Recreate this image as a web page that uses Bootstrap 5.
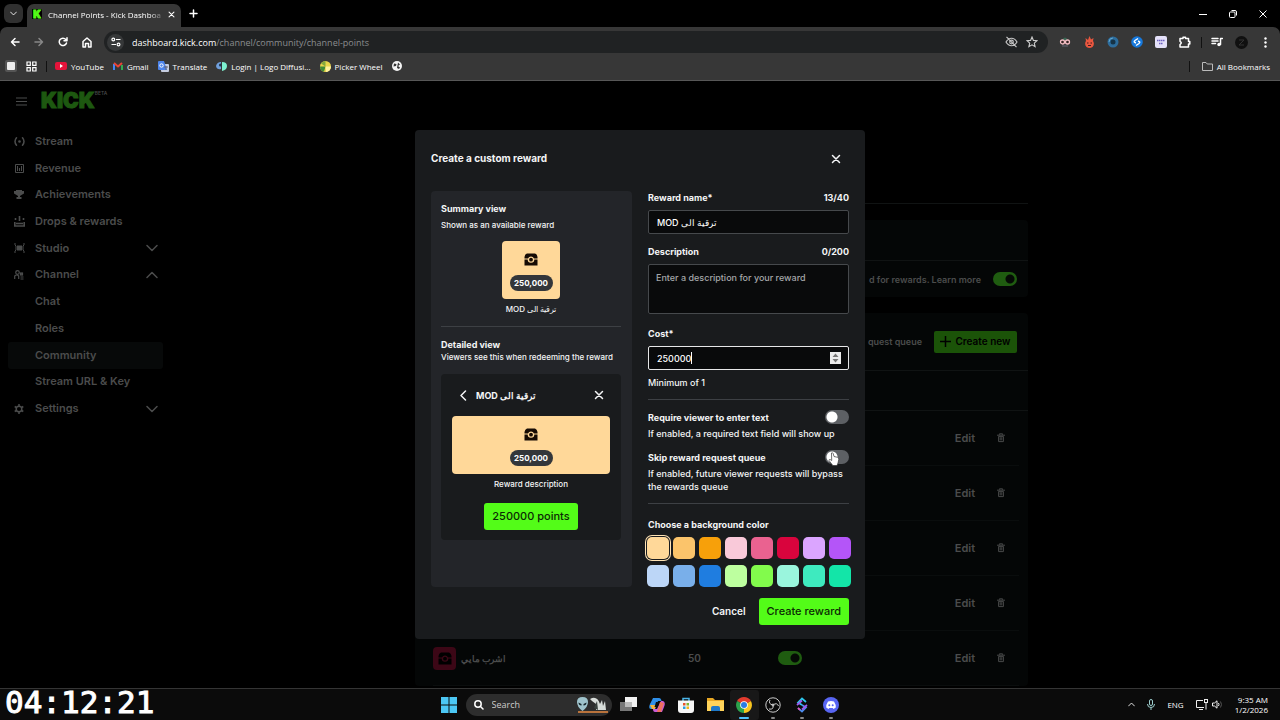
<!DOCTYPE html>
<html lang="en">
<head>
<meta charset="utf-8">
<meta name="viewport" content="width=device-width, initial-scale=1">
<title>Channel Points - Kick Dashboard</title>
<link href="https://cdn.jsdelivr.net/npm/bootstrap@5.3.0/dist/css/bootstrap.min.css" rel="stylesheet">
<style>
:root{--kick:#53fc18;--panel:#191b1d;--panel2:#232529;--dim:#4b4c4c;--bar:#373737}
body{background:#000;color:#fff;font:500 9px/13px Inter,"Noto Sans",sans-serif;height:100vh;overflow:hidden}
a{color:inherit;text-decoration:none}
button{background:none;border:0;padding:0;color:inherit;font:inherit}
svg{display:block;flex:none}
.ln{fill:none;stroke:currentColor;stroke-width:1.5;stroke-linecap:round;stroke-linejoin:round}
/* browser */
.chrome-ui{font-family:"Open Sans","Noto Sans",sans-serif;font-weight:500}
.tabstrip{height:27px;padding:4px 2px 0 4px}
.tabmenu{width:19px;height:19px;border-radius:6px;background:#303030}
.apptab{width:154px;height:23px;margin-left:4px;padding:0 6px 3px 5px;background:var(--bar);border-radius:7px 7px 0 0;font-size:8px}
.tabtitle{white-space:nowrap;-webkit-mask-image:linear-gradient(90deg,#000 90%,#0004);mask-image:linear-gradient(90deg,#000 90%,#0004)}
.fav{width:10px;height:10px;margin-right:6px;background:#000;color:var(--kick);font:900 10px/10px Inter,sans-serif;-webkit-text-stroke:1px var(--kick);text-align:center}
.winbtn{width:30px;height:19px}
.toolbar{height:30px;background:var(--bar);padding:0 3px;border-radius:7px 7px 0 0}
.tb{width:24px;height:24px;display:flex;align-items:center;justify-content:center}
.tb.off{color:#888}
.urlbar{height:22px;border-radius:11px;background:#202223;margin:0 5px;padding:0 6px 0 3px;font-size:9px}
.urlbar .site{width:17px;height:17px;border-radius:50%;background:#363839}
.urlbar .path{color:#8b8d8f}
.vr1{width:1px;height:11px;background:#111}
.tbsep{margin:0 3px 0 4px}
.bookmarks{height:24px;background:var(--bar);border-bottom:1px solid #575757;font-size:8px;padding:0 10px 5px 5px}
.bookmarks a{display:flex;align-items:center;gap:4px;white-space:nowrap;margin-right:9px}
.bookmarks a:last-child{margin-right:0}
/* dashboard */
.dash{background:#000;color:var(--dim)}
.logo{font:900 21px/20px Inter,sans-serif;margin-left:14px;color:#1d5810;-webkit-text-stroke:1px #1d5810}
.beta{font-size:5px;line-height:6px}
.side{width:163px;padding-left:8px}
.topline{height:40px;padding:0 0 0 8px}
.menu{display:grid;grid-auto-rows:1fr;height:294px;margin-top:7px;font-size:11px;font-weight:600}
.menu a{display:flex;align-items:center;padding:0 5px 0 5px;border-radius:3px}
.menu i{width:12px;margin-right:10px;display:flex;justify-content:center}
.menu .on{background:#070909}
.board{max-width:613px;margin-top:122px;font-weight:600}
.board .box{background:#040606;border-radius:4px}
.board hr,.popup hr{margin:0;border:0;height:1px;opacity:1;background:#101313}
.cardtop{height:40px}
.cardline{height:36px;padding-right:11px}
.cardhead{height:57px;padding-right:11px}
.colhead{height:39px}
.newbtn{width:83px;height:22px;border-radius:2px;background:#1b5308;color:#000;font-size:10px;font-weight:600}
.rw{height:55px;border-bottom:1px solid #0a0d0d;margin:0 9px 0 18px;display:grid;grid-template-columns:24px 1fr 71px 120px 97px 36px 36px;align-items:center}
.rw>*{text-align:center}
.rw button{font-size:11px}
.rw .qty{font-size:10px}
.tgl{appearance:none;width:24px;height:14px;margin:0;border-radius:7px;border:0;flex:none;vertical-align:middle;background:radial-gradient(circle at 7px 7px,#fff 5px,transparent 6px) #5d6064}
.tgl.dimon{background:radial-gradient(circle at 17px 7px,#050a05 4px,transparent 5px) #1f5c10}
.rowicon{width:23px;height:23px;border-radius:4px;background:#3c0716;color:#000}
/* popup */
.popup{width:450px;background:var(--panel);color:#f4f5f6;border-radius:4px;padding:16px 16px 14px}
.pophead{height:25px;margin-bottom:20px;padding-right:8px;font-size:10px;font-weight:700}
.popfoot{padding-top:11px;gap:9px;font-size:10px;font-weight:600}
.bold{font-weight:700}
.preview{background:var(--panel2);border-radius:4px;padding:11px 11px 0 10px;width:201px}
.preview hr{margin:10px 0 11px}
.preview hr,.popup .rule{background:#3d4044}
.note{font-size:8px}
.tile{background:#ffd899;color:#160b04;border-radius:4px;height:58px;padding-top:12px;gap:9px}
.tile.mini{width:58px;margin:9px auto 0}
.pill{background:#33363a;color:#fff;border-radius:8px;height:16px;width:43px;line-height:16px;font-size:8px;font-weight:700;text-align:center}
.detail{background:var(--panel);border-radius:4px;padding:0 11px 10px;margin-top:10px}
.detailhead{height:42px;padding:0 6px}
.greenbtn{background:var(--kick);color:#0b2a04;border-radius:3px;height:27px;font-size:11px;font-weight:500;padding:0 8px}
.form2{width:201px}
.lab{margin-bottom:6px;font-weight:700;display:flex;justify-content:space-between}
.fld{display:block;width:100%;background:#090a0b;border:1px solid #46494c;border-radius:2px;color:#fff;height:24px;padding:0 8px;margin-bottom:11px;font:500 9px/13px Inter,"Noto Sans",sans-serif;outline:0;resize:none}
input.fld[dir=rtl]{text-align:left}
textarea.fld{height:50px;padding:6px 7px;margin-bottom:13px}
.fld::placeholder{color:#a5a7a9;opacity:1}
.fld.act{border-color:#e6e7e8;margin-bottom:6px}
.rule{margin:10px 0!important}
.opt{display:flex;justify-content:space-between;align-items:center;margin-bottom:3px;font-weight:700}
.opttext{margin-bottom:10px}
.caret{position:absolute;left:43px;top:6px;width:1px;height:12px;background:#fff}
.spin{position:absolute;right:8px;top:6px;width:11px;height:12px;background:#ececec;color:#777}
.hand{position:absolute;left:3px;top:2px}
.swatches{display:grid;grid-template-columns:repeat(8,22px);gap:6px 4px;margin:0 -2px 0 -1px}
.swatches input{appearance:none;width:22px;height:22px;border-radius:5px;margin:0}
.swatches input:checked{box-shadow:0 0 0 1px #191b1d,0 0 0 2px #ffe3b5}
/* taskbar */
.taskbar{height:32px;background:#0b0b0b;border-top:1px solid #353535;display:grid;grid-template-columns:1fr auto 1fr;align-items:center}
.clock{font:400 31px/26px "DejaVu Sans Mono",monospace;-webkit-text-stroke:1px #fff;padding-left:5px;align-self:start}
.tk{width:29px;height:30px;display:flex;align-items:center;justify-content:center;position:relative}
.tk.run::after{content:"";position:absolute;bottom:1px;width:4px;height:2px;border-radius:1px;background:#888}
.tk.cur{background:#181818;border-radius:3px}
.tk.cur::after{width:10px;background:#4cc2ff}
.search{width:146px;height:22px;border-radius:11px;background:#2d2d2d;padding:0 2px 0 8px;margin:0 2px}
.search input{width:80px;background:none;border:0;outline:0;color:#ddd;font:400 9px/14px "Open Sans",sans-serif;padding:0}
.search input::placeholder{color:#ccc;opacity:1}
.tray{gap:12px;padding-right:12px;font-size:8px}
.time{line-height:10px}
</style>
</head>
<body class="d-flex flex-column">
<svg width="0" height="0" class="position-absolute">
<defs>
<symbol id="x" viewBox="0 0 10 10"><path class="ln" d="M1.500 1.500l7 7M8.500 1.500l-7 7"/></symbol>
<symbol id="down" viewBox="0 0 12 8"><path class="ln" d="M1 1.500l5 5 5-5"/></symbol>
<symbol id="bin" viewBox="0 0 10 12"><path fill="none" stroke="currentColor" stroke-width="1.200" d="M0 2.500h10M3 2V.8h4V2M2 4v6.500h6V4zM4 5v4M6 5v4"/></symbol>
<symbol id="chest" viewBox="0 0 14 13"><path fill="currentColor" fill-rule="evenodd" d="M3 .5h8q2 .5 2.500 3.500v1.500H10a3.300 3.300 0 0 0-6 0H.5V4Q1 1 3 .5zM.5 6.500h3.200a3.300 3.300 0 0 0 6.600 0h3.200v6H.5z"/><circle cx="7" cy="6.700" r="1.900" fill="currentColor"/></symbol>
</defs></svg>

<header class="chrome-ui">
 <div class="tabstrip d-flex">
  <button class="tabmenu d-flex align-items-center justify-content-center" aria-label="Search tabs"><svg width="7" height="5"><use href="#down"/></svg></button>
  <div class="apptab d-flex align-items-center"><span class="fav">K</span><span class="tabtitle">Channel Points - Kick Dashboa</span>
   <button class="ms-auto" aria-label="Close tab"><svg width="7" height="7"><use href="#x"/></svg></button></div>
  <button class="ms-2 mb-1" aria-label="New tab"><svg width="9" height="9" viewBox="0 0 9 9"><path class="ln" d="M4.500 1v7M1 4.500h7"/></svg></button>
  <div class="ms-auto d-flex">
   <button class="winbtn d-flex align-items-center justify-content-center" aria-label="Minimize"><svg width="8" height="8"><path stroke="#fff" d="M0 4.500h8"/></svg></button>
   <button class="winbtn d-flex align-items-center justify-content-center" aria-label="Restore"><svg width="8" height="8" viewBox="0 0 8 8" fill="none" stroke="#fff"><rect x=".5" y="2" width="5.500" height="5.500" rx="1"/><path d="M2.500.5H6A1.500 1.500 0 0 1 7.500 2v3.500"/></svg></button>
   <button class="winbtn d-flex align-items-center justify-content-center" aria-label="Close"><svg width="8" height="8" viewBox="0 0 8 8"><path stroke="#fff" d="M.5.5l7 7M7.500.5l-7 7"/></svg></button>
  </div>
 </div>
 <div class="toolbar d-flex align-items-center">
  <button class="tb" aria-label="Back"><svg width="10" height="10" viewBox="0 0 10 10"><path class="ln" d="M9 5H1.500M5 1.500L1.500 5 5 8.500"/></svg></button>
  <button class="tb off" aria-label="Forward"><svg width="10" height="10" viewBox="0 0 10 10"><path class="ln" d="M1 5h7.500M5 1.500L8.500 5 5 8.500"/></svg></button>
  <button class="tb" aria-label="Reload"><svg width="10" height="10" viewBox="0 0 10 10"><path class="ln" d="M8.500 6A3.700 3.700 0 1 1 7.800 2.500L9 3.500M9 .8v2.900H6"/></svg></button>
  <button class="tb" aria-label="Home"><svg width="10" height="11" viewBox="0 0 10 11"><path class="ln" d="M1 4.500L5 1l4 3.500V10H6.500V6.500h-3V10H1z"/></svg></button>
  <div class="urlbar d-flex align-items-center flex-fill">
   <span class="site d-flex align-items-center justify-content-center"><svg width="10" height="10" viewBox="0 0 10 10" fill="none" stroke="#fff" stroke-width="1.200"><circle cx="2.300" cy="2.500" r="1.400"/><circle cx="7.500" cy="7.500" r="1.400"/><path d="M5 2.500h4.500M.5 7.500H5"/></svg></span>
   <span class="ms-1 ps-1">dashboard.kick.com<span class="path">/channel/community/channel-points</span></span>
   <svg class="ms-auto" width="13" height="12" viewBox="0 0 13 12" fill="none" stroke="#c5c5c5" stroke-width="1.200"><path d="M1 6c3-5 8-5 11 0-3 5-8 5-11 0zM1.500 .8l10 10.400"/><circle cx="6.500" cy="6" r="1.800"/></svg>
   <svg class="ms-2 me-1" width="12" height="12" viewBox="0 0 12 12" fill="none" stroke="#ccc" stroke-width="1.100"><path d="M6 1l1.400 3.400 3.600.3-2.700 2.400.8 3.600L6 8.800l-3.100 1.900.8-3.600L1 4.700l3.600-.3z"/></svg>
  </div>
  <span class="tb"><svg width="12" height="12" viewBox="0 0 12 12"><path d="M3 4q3-5 6 0z" fill="#396653"/><circle cx="3.500" cy="6" r="2" fill="#322" stroke="#f3bcc2" stroke-width="1.300"/><circle cx="8.500" cy="6" r="2" fill="#322" stroke="#f3bcc2" stroke-width="1.300"/><path d="M3 10h6" stroke="#667"/></svg></span>
  <span class="tb"><svg width="11" height="12" viewBox="0 0 11 12"><path fill="#e9573f" d="M2 5L1.500 2 4 4 5.500 0 7 3.500 9.500 2 9 5q2 3-.5 6-3 2-6 0Q0 8 2 5z"/><path d="M3 7h1.500M6.500 7H8M4 9.500h3" stroke="#401a20"/></svg></span>
  <span class="tb"><svg width="12" height="12"><circle cx="6" cy="6" r="5.500" fill="#2d6d9d"/><circle cx="6" cy="6" r="2.500" fill="#163346"/><path d="M2 6a4 4 0 0 1 4-4" stroke="#63a7ce" fill="none"/></svg></span>
  <span class="tb"><svg width="12" height="12"><circle cx="6" cy="6" r="5.800" fill="#1678dc"/><path d="M7 2.500L4 4.500q-2 1.500 1 2.500M5 9.500l3-2q2-1.500-1-2.500" stroke="#fff" stroke-width="1.400" fill="none"/></svg></span>
  <span class="tb"><svg width="12" height="12"><rect width="12" height="12" rx="2" fill="#e4e1fa"/><path d="M2 4.500h8M4 7.500h4" stroke="#6b5fc0" stroke-width="1.500" stroke-dasharray="1.500 .5"/></svg></span>
  <button class="tb" aria-label="Extensions"><svg width="12" height="12" viewBox="0 0 12 12"><path class="ln" d="M1 2.500h3V1.200h2.500v1.300H9.500v3h1.300V8H9.500v3H1V8.500q2.500-1.700 0-3.200z"/></svg></button>
  <span class="vr1 tbsep"></span>
  <button class="tb" aria-label="Media"><svg width="12" height="10" viewBox="0 0 12 10"><path class="ln" d="M1 1.500h6M1 4h6M1 6.500h3.500M9.500 7.500V1.500H11.500"/><circle cx="8" cy="7.500" r="1.700" fill="#fff"/></svg></button>
  <span class="tb"><svg width="13" height="13"><circle cx="6.500" cy="6.500" r="6.500" fill="#101010"/><path d="M4 4h5L4 9h5" stroke="#333" fill="none"/></svg></span>
  <button class="tb" aria-label="Menu"><svg width="3" height="11" fill="#fff"><circle cx="1.500" cy="1.500" r="1.200"/><circle cx="1.500" cy="5.500" r="1.200"/><circle cx="1.500" cy="9.500" r="1.200"/></svg></button>
 </div>
 <nav class="bookmarks d-flex align-items-center">
  <a href="#" aria-label="Page"><svg width="12" height="12"><rect width="12" height="12" rx="2" fill="#555"/><rect x="2" y="2" width="8" height="8" rx="1" fill="#eee"/></svg></a>
  <a href="#" aria-label="Apps"><svg width="11" height="11" fill="none" stroke="#fff" stroke-width="1.200"><path d="M1 1h3.300v3.300H1zM6.700 1H10v3.300H6.700zM1 6.700h3.300V10H1zM6.700 6.700H10V10H6.700z"/></svg></a>
  <span class="vr1 me-2"></span>
  <a href="#"><svg width="12" height="10"><rect y="1" width="12" height="8" rx="2" fill="#e5133a"/><path fill="#fff" d="M5 3l3 2-3 2z"/></svg>YouTube</a>
  <a href="#"><svg width="10" height="8" fill="none" stroke-width="2"><path stroke="#4285f4" d="M1 8V2"/><path stroke="#34a853" d="M9 8V3"/><path stroke="#ea4335" d="M1 1l4 3.500L9 1"/></svg>Gmail</a>
  <a href="#"><svg width="11" height="11"><rect x="3" y="3" width="8" height="8" rx="1" fill="#c5cde0"/><path fill="#4c84ec" d="M0 1q0-1 1-1h5l3 9H1Q0 9 0 8z"/><circle cx="3.500" cy="4.500" r="1.700" fill="none" stroke="#fff"/><path d="M6 6h4M8 5v4" stroke="#667"/></svg>Translate</a>
  <a href="#"><svg width="11" height="11"><path fill="#6f9fdc" d="M5 1v7Q1 9 0 5q1-4 5-4z"/><path fill="#7df0cf" d="M6 1q5 0 5 4t-5 5z"/><circle cx="4.500" cy="4" r="1.500" fill="#234"/></svg>Login | Logo Diffusi...</a>
  <a href="#"><svg width="11" height="11"><circle cx="5.500" cy="5.500" r="5.500" fill="#e9d44b"/><path d="M5.500 5.500L0 5.500A5.500 5.500 0 0 0 4 10.800z" fill="#3f8a38"/><path d="M5.500 5.500L11 5.500A5.500 5.500 0 0 1 6 11z" fill="#fff2a0"/><path d="M5.500 5.500V0A5.500 5.500 0 0 0 1 2.500z" fill="#83a83d"/></svg>Picker Wheel</a>
  <a href="#" aria-label="Site"><svg width="10" height="10"><circle cx="5" cy="5" r="5" fill="#f4f4f4"/><path d="M2 2.500l2.500.5L4 5l-2.500.5zM6 1.500l2 2-2 1.500 2 1.500-1 1.500-2-1" fill="#333"/></svg></a>
  <span class="vr1 ms-auto me-2"></span>
  <a href="#" class="ms-1"><svg width="11" height="9" viewBox="0 0 11 9" fill="none" stroke="#bbb"><path d="M.5.5H4l1.200 1.500h5.300v6.500H.5z"/></svg>All Bookmarks</a>
 </nav>
</header>

<div class="dash flex-fill position-relative overflow-hidden d-flex">
 <aside class="side flex-shrink-0">
  <div class="topline d-flex align-items-center">
   <button aria-label="Menu"><svg width="11" height="9" stroke="currentColor" stroke-width="1.200"><path d="M0 1h11M0 4.500h11M0 8h11"/></svg></button>
   <a href="#" class="logo d-block">KICK</a><span class="beta mb-3">BETA</span>
  </div>
  <nav class="menu">
   <a href="#"><i><svg width="11" height="9" viewBox="0 0 11 9"><path class="ln" d="M2.500.8q-3 3.700 0 7.400M8.500.8q3 3.700 0 7.400"/><circle cx="5.500" cy="4.500" r="1.300" fill="currentColor"/></svg></i>Stream</a>
   <a href="#"><i><svg width="9" height="9" fill="none" stroke="currentColor"><path d="M.5.5h8v8h-8zM2.500 2v5M4.500 4v3M6.500 2v5"/></svg></i>Revenue</a>
   <a href="#"><i><svg width="10" height="9" fill="currentColor"><path d="M2 0h6v1h2v2.500L7.500 5 6 6v1h1.500v2h-5V7H4V6L2.500 5 0 3.500V1h2z"/></svg></i>Achievements</a>
   <a href="#"><i><svg width="11" height="11" fill="none" stroke="currentColor" stroke-width="1.600"><path d="M5.500 0v5M1.500 2v2M9.500 2v2M.8 6v4h9.400V6"/><path d="M2 7.500h7"/></svg></i>Drops &amp; rewards</a>
   <a href="#"><i><svg width="11" height="10" fill="none" stroke="currentColor"><path d="M1 0v2l1 1v4L1 8v2M10 0v2L9 3v4l1 1v2"/><rect x="3.500" y="3" width="4" height="4" fill="currentColor"/></svg></i>Studio<svg class="ms-auto" width="12" height="8"><use href="#down"/></svg></a>
   <a href="#"><i><svg width="10" height="10" fill="none" stroke="currentColor" stroke-width="1.200"><circle cx="3.500" cy="2.500" r="1.800"/><path d="M.7 9V6q2-2 4 0v3M6.500 7h3M6.500 9h3"/><rect x="6.500" y="3" width="2" height="2"/></svg></i>Channel<svg class="ms-auto" width="12" height="8" viewBox="0 0 12 8"><path class="ln" d="M1 6.500l5-5 5 5"/></svg></a>
   <a href="#"><i></i>Chat</a>
   <a href="#"><i></i>Roles</a>
   <a href="#" class="on"><i></i>Community</a>
   <a href="#"><i></i>Stream URL &amp; Key</a>
   <a href="#"><i><svg width="10" height="10" fill="none" stroke="currentColor" stroke-width="1.500"><circle cx="5" cy="5" r="2.800"/><path d="M5 0v2M5 8v2M.7 2.500l1.700 1M7.600 6.500l1.700 1M.7 7.500l1.700-1M7.600 3.500l1.700-1"/></svg></i>Settings<svg class="ms-auto" width="12" height="8"><use href="#down"/></svg></a>
  </nav>
 </aside>
 <main class="flex-fill d-flex justify-content-center">
  <div class="board w-100">
   <hr>
   <section class="box mt-3">
    <div class="cardtop"></div><hr>
    <div class="cardline d-flex align-items-center justify-content-end gap-2"><span class="me-1">d for rewards. <a href="#">Learn more</a></span><input type="checkbox" checked class="tgl dimon" aria-label="Enable channel points"></div>
   </section>
   <section class="box mt-3">
    <div class="cardhead d-flex align-items-center justify-content-end gap-2"><span class="me-1">quest queue</span><button class="newbtn d-flex align-items-center justify-content-center gap-1"><svg width="11" height="11" stroke="#000" stroke-width="1.500"><path d="M5.500 0v11M0 5.500h11"/></svg>Create new</button></div>
    <hr><div class="colhead"></div><hr>
    <div class="rw"><span></span><span></span><span></span><span></span><span></span><button>Edit</button><button class="d-flex justify-content-center" aria-label="Delete"><svg width="8" height="10"><use href="#bin"/></svg></button></div>
    <div class="rw"><span></span><span></span><span></span><span></span><span></span><button>Edit</button><button class="d-flex justify-content-center" aria-label="Delete"><svg width="8" height="10"><use href="#bin"/></svg></button></div>
    <div class="rw"><span></span><span></span><span></span><span></span><span></span><button>Edit</button><button class="d-flex justify-content-center" aria-label="Delete"><svg width="8" height="10"><use href="#bin"/></svg></button></div>
    <div class="rw"><span></span><span></span><span></span><span></span><span></span><button>Edit</button><button class="d-flex justify-content-center" aria-label="Delete"><svg width="8" height="10"><use href="#bin"/></svg></button></div>
    <div class="rw"><span class="rowicon d-flex align-items-center justify-content-center"><svg width="14" height="13"><use href="#chest"/></svg></span><span class="text-start ps-1" lang="ar">اشرب مايي</span><span class="qty">50</span><span><input type="checkbox" checked class="tgl dimon" aria-label="Enable reward"></span><span></span><button>Edit</button><button class="d-flex justify-content-center" aria-label="Delete"><svg width="8" height="10"><use href="#bin"/></svg></button></div>
   </section>
  </div>
 </main>

 <div class="position-absolute top-0 start-0 w-100 h-100 d-flex align-items-center justify-content-center">
  <div class="popup" role="dialog" aria-labelledby="dlg">
   <div class="pophead d-flex justify-content-between align-items-center"><span id="dlg">Create a custom reward</span><button aria-label="Close"><svg width="10" height="10"><use href="#x"/></svg></button></div>
   <div class="d-flex gap-3">
    <section class="preview">
     <div class="bold">Summary view</div>
     <div class="note mt-1">Shown as an available reward</div>
     <div class="tile mini d-flex flex-column align-items-center"><svg width="14" height="13"><use href="#chest"/></svg><span class="pill">250,000</span></div>
     <div class="note text-center mt-1" dir="rtl">ترقية الى MOD</div>
     <hr>
     <div class="bold">Detailed view</div>
     <div class="note">Viewers see this when redeeming the reward</div>
     <div class="detail">
      <div class="detailhead d-flex align-items-center gap-2 bold"><svg width="10" height="11" viewBox="0 0 10 11"><path class="ln" d="M7.500 1L3 5.500 7.500 10"/></svg><span dir="rtl">ترقية الى MOD</span><button class="ms-auto" aria-label="Close preview"><svg width="10" height="10"><use href="#x"/></svg></button></div>
      <div class="tile d-flex flex-column align-items-center"><svg width="14" height="13"><use href="#chest"/></svg><span class="pill">250,000</span></div>
      <div class="note text-center mt-1">Reward description</div>
      <div class="text-center mt-2 pt-1"><button class="greenbtn">250000 points</button></div>
     </div>
    </section>
    <form class="form2" onsubmit="return false">
     <div class="lab"><label for="nm">Reward name*</label><span>13/40</span></div>
     <input id="nm" class="fld" dir="rtl" value="ترقية الى MOD">
     <div class="lab"><label for="ds">Description</label><span>0/200</span></div>
     <textarea id="ds" class="fld" placeholder="Enter a description for your reward"></textarea>
     <label for="ct" class="lab">Cost*</label>
     <div class="position-relative"><input id="ct" class="fld act" value="250000" inputmode="numeric"><span class="caret"></span><svg class="spin" viewBox="0 0 11 12"><path fill="currentColor" d="M2.500 5l3-3.500 3 3.500zM2.500 7l3 3.500 3-3.500z"/></svg></div>
     <div>Minimum of 1</div>
     <hr class="rule">
     <div class="opt"><label for="t1">Require viewer to enter text</label><input id="t1" type="checkbox" role="switch" class="tgl"></div>
     <div class="opttext">If enabled, a required text field will show up</div>
     <div class="opt"><label for="t2">Skip reward request queue</label><span class="position-relative d-flex"><input id="t2" type="checkbox" role="switch" class="tgl"><svg class="hand" width="12" height="14" viewBox="0 0 12 14"><path fill="#fff" stroke="#333" stroke-width=".7" d="M3.500 1q1.200-.8 1.700.6L6 4.500l3.500.8q1.500.4 1.300 2L10 11l-1 2.500H4.800L1 8.500q0-1.500 1.500-.8l1.200.8z"/></svg></span></div>
     <div>If enabled, future viewer requests will bypass the rewards queue</div>
     <hr class="rule">
     <div class="lab pt-1" id="bgc">Choose a background color</div>
     <div class="swatches" role="radiogroup" aria-labelledby="bgc"></div>
    </form>
   </div>
   <div class="popfoot d-flex justify-content-end align-items-center"><button class="px-1">Cancel</button><button class="greenbtn">Create reward</button></div>
  </div>
 </div>
</div>

<footer class="taskbar chrome-ui">
 <div class="clock">04:12:21</div>
 <div class="d-flex align-items-center">
  <button class="tk" aria-label="Start"><svg width="16" height="16" fill="#4cc7f4"><path d="M0 0h7.500v7.500H0zM8.500 0H16v7.500H8.500zM0 8.500h7.500V16H0zM8.500 8.500H16V16H8.500z"/></svg></button>
  <label class="search d-flex align-items-center"><svg width="10" height="10" viewBox="0 0 10 10" class="me-2"><circle class="ln" cx="4" cy="4" r="3.200"/><path class="ln" d="M6.500 6.500L9 9"/></svg><input type="search" placeholder="Search">
   <svg class="ms-auto" width="34" height="18" viewBox="0 0 34 18"><path d="M2 16h30" stroke="#b9733c" stroke-width="2"/><path d="M14 3q7-4 10 5l2-4 1 6 2-5 1 9H20V8l-4-3z" fill="#d7dcd9"/><path d="M18 12l3-7 1 9z" fill="#39413d"/><path fill="#9fc3cc" d="M1 6q0-5 5.500-5T12 6q0 5-5.500 9Q1 11 1 6z"/><path fill="#15242a" d="M2.500 6.500l3 1.500v1.500q-3 0-3-3zM10.500 6.500l-3 1.500v1.500q3 0 3-3z"/></svg></label>
  <button class="tk" aria-label="Task view"><svg width="17" height="15"><rect x="0" y="5" width="12" height="9" fill="#777"/><rect x="5" y="0" width="12" height="10" fill="#f2f2f2"/><path d="M5 5h7v5H5z" fill="#bbb"/></svg></button>
  <button class="tk" aria-label="Copilot"><svg width="16" height="16" viewBox="0 0 16 16"><path fill="#2f8fe8" d="M4 1h6q2 0 2.500 3H9L6 12H2q-3 0-1-5z"/><path fill="#f5b23c" d="M1 8l2 4h3l1-4z"/><path fill="#c95bd6" d="M12 4h2q3 1 1 6l-2 5H6q-2 0-2-3h4z"/><path fill="#f0705c" d="M9 12l2-7 4 1-3 9H8z"/><path fill="#0b0b0b" d="M7 5h2l-1.500 5h-2z"/></svg></button>
  <button class="tk" aria-label="Store"><svg width="16" height="16"><path d="M5 4V1.500h6V4" fill="none" stroke="#49b5e8" stroke-width="1.500"/><path fill="#f6f6f6" d="M0 3.500h16V13q0 3-3 3H3q-3 0-3-3z"/><path fill="#e6532c" d="M5 6h2.500v2.500H5z"/><path fill="#7db52e" d="M8.500 6H11v2.500H8.500z"/><path fill="#2a9fe0" d="M5 9.500h2.500V12H5z"/><path fill="#f5b71d" d="M8.500 9.500H11V12H8.500z"/></svg></button>
  <button class="tk" aria-label="Explorer"><svg width="17" height="15"><path fill="#e8a724" d="M0 1h6l2 2h9v11H0z"/><path fill="#ffd35a" d="M0 4h17v10H0z"/><path fill="#1e78c8" d="M4 14v-3q0-2 2-2h5q2 0 2 2v3z"/></svg></button>
  <button class="tk run cur" aria-label="Chrome"><svg width="16" height="16" viewBox="0 0 16 16"><path fill="#e33b2e" d="M8 8L1.100 4A8 8 0 0 1 14.900 4z"/><path fill="#f9c51f" d="M8 8l6.900-4A8 8 0 0 1 8 16z"/><path fill="#2ba24c" d="M8 8v8A8 8 0 0 1 1.100 4z"/><circle cx="8" cy="8" r="3.800" fill="#fff"/><circle cx="8" cy="8" r="3" fill="#2a7be4"/></svg></button>
  <button class="tk run" aria-label="OBS"><svg width="16" height="16" fill="none" stroke="#ccc"><circle cx="8" cy="8" r="7.200"/><path d="M8 8q-5-1-3-5M8 8q4-3 5.500 1M8 8q1 5-4 4"/><circle cx="8" cy="8" r="1"/></svg></button>
  <button class="tk run" aria-label="Streamer tool"><svg width="12" height="16" fill="none" stroke-width="1.700"><path stroke="#2cc8ee" d="M10 5L6 1.500 2 5.500l4 2.500"/><path stroke="#4d8ef0" d="M6 8l4 2.500L6 14.500 2 11"/><path stroke="#a25af0" d="M1 8l5-4.500M11 8l-5 4.500"/><path stroke="#ee4fb1" d="M2 11l2 2"/></svg></button>
  <button class="tk run" aria-label="Discord"><svg width="16" height="16"><circle cx="8" cy="8" r="8" fill="#5865f2"/><path fill="#fff" d="M5 4.500q3-1 6 0 2 3 1.800 6L10.500 12l-.8-1H6.300l-.8 1-2.300-1.500Q3 7.500 5 4.500z"/><circle cx="6.300" cy="8.300" r="1" fill="#5865f2"/><circle cx="9.700" cy="8.300" r="1" fill="#5865f2"/></svg></button>
 </div>
 <div class="tray d-flex align-items-center justify-content-end">
  <svg width="7" height="5" viewBox="0 0 12 8"><path class="ln" d="M1 6.500l5-5 5 5"/></svg>
  <svg width="8" height="11" viewBox="0 0 8 11" fill="none" stroke="#9fd0d0"><rect x="2.500" y=".5" width="3" height="6" rx="1.500"/><path d="M.5 5q0 3.500 3.500 3.500T7.500 5M4 8.500V11"/></svg>
  <span>ENG</span>
  <span class="d-flex align-items-center gap-1"><svg width="12" height="11" viewBox="0 0 12 11" fill="none" stroke="#eee"><path d="M7 1.500H.5v7H8M3 10.500h4M10 4v6.500"/><rect x="8.500" y=".5" width="3" height="3"/></svg>
  <svg width="11" height="9" viewBox="0 0 11 9" fill="none" stroke="#eee"><path d="M.5 3h2L5 .8v7.400L2.500 6h-2zM6.500 3q1 1.500 0 3"/><path stroke="#555" d="M8.500 1.500q2 3 0 6"/></svg></span>
  <div class="time text-end">9:35 AM<br>1/2/2026</div>
 </div>
</footer>
<script src="https://cdn.jsdelivr.net/npm/bootstrap@5.3.0/dist/js/bootstrap.bundle.min.js"></script>
<script>
const colors=['#ffd899','#fbc46b','#f7a00a','#f9c9d9','#ea6290','#d9043d','#dba5ff','#b455f8','#bcd6f7','#79afea','#1f7de0','#bdff9f','#82fb4c','#9af5dd','#3eeabf','#13e5a8'];
document.querySelector('.swatches').innerHTML=colors.map((c,i)=>`<input type="radio" name="bg" aria-label="${c}" style="background:${c}"${i?'':' checked'}>`).join('');
</script>
</body>
</html>
